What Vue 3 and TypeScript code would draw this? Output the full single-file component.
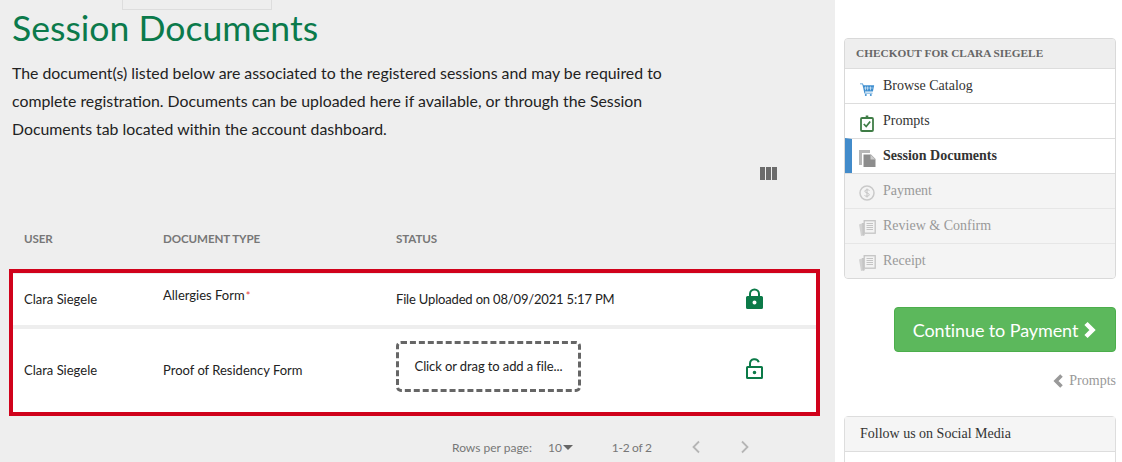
<script setup lang="ts">
interface Step { label: string; icon: string; state: 'done' | 'active' | 'off' }
const steps: Step[] = [
  { label: 'Browse Catalog', icon: 'cart', state: 'done' },
  { label: 'Prompts', icon: 'clip', state: 'done' },
  { label: 'Session Documents', icon: 'docs', state: 'active' },
  { label: 'Payment', icon: 'pay', state: 'off' },
  { label: 'Review & Confirm', icon: 'news', state: 'off' },
  { label: 'Receipt', icon: 'news', state: 'off' },
]
</script>

<template>
  <div class="page">
    <main class="main">
      <div class="tab"></div>
      <h1 class="title">Session Documents</h1>
      <p class="intro">The document(s) listed below are associated to the registered sessions and may be required to complete registration. Documents can be uploaded here if available, or through the Session Documents tab located within the account dashboard.</p>
      <div class="tools">
        <svg width="18" height="14" viewBox="0 0 18 14"><path fill="#6b6b6b" d="M0 0h5v13H0zM6 0h5v13H6zM12 0h5v13h-5z"/></svg>
      </div>
      <div class="grid head">
        <div>USER</div><div>DOCUMENT TYPE</div><div>STATUS</div><div></div>
      </div>
      <div class="box">
        <div class="grid row row1">
          <div class="cell">Clara Siegele</div>
          <div class="cell raised">Allergies Form<span class="req">*</span></div>
          <div class="cell status">File Uploaded on 08/09/2021 5:17 PM</div>
          <div class="lock">
            <svg width="17" height="21" viewBox="0 0 17 21"><path fill="#0b7a48" fill-rule="evenodd" d="M3 8V6a5.500 5.500 0 0 1 11 0v2h1.500A1.500 1.500 0 0 1 17 9.500v10a1.500 1.500 0 0 1-1.500 1.500h-14A1.500 1.500 0 0 1 0 19.500v-10A1.500 1.500 0 0 1 1.500 8zM5 8h7V6a3.500 3.500 0 0 0-7 0zM8.500 12.500a2 2 0 1 0 0 4 2 2 0 0 0 0-4z"/></svg>
          </div>
        </div>
        <div class="grid row row2">
          <div class="cell">Clara Siegele</div>
          <div class="cell">Proof of Residency Form</div>
          <div class="cell"><div class="drop">Click or drag to add a file...</div></div>
          <div class="lock open">
            <svg width="17" height="21" viewBox="0 0 17 21"><path fill="#0b7a48" fill-rule="evenodd" d="M3 8V5.500a5.500 5.500 0 0 1 10.700-1.600l-1.900.6A3.500 3.500 0 0 0 5 5.500V8h10.500A1.500 1.500 0 0 1 17 9.500v10a1.500 1.500 0 0 1-1.500 1.500h-14A1.500 1.500 0 0 1 0 19.500v-10A1.500 1.500 0 0 1 1.500 8zM2 10v9h13v-9zM8.500 12.700a1.800 1.800 0 1 0 0 3.600 1.800 1.800 0 0 0 0-3.600z"/></svg>
          </div>
        </div>
      </div>
      <div class="pager">
        <span class="rows">Rows per page:</span>
        <span class="size">10<i class="caret"></i></span>
        <span class="range">1-2 of 2</span>
        <svg class="pg" width="10" height="14" viewBox="0 0 10 14"><path d="M8 1.500 2.500 7 8 12.500" fill="none" stroke="#b5b5b5" stroke-width="1.800"/></svg>
        <svg class="pg" width="10" height="14" viewBox="0 0 10 14"><path d="M2 1.500 7.500 7 2 12.500" fill="none" stroke="#b5b5b5" stroke-width="1.800"/></svg>
      </div>
    </main>

    <aside class="side">
      <section class="panel">
        <header class="panel-head">CHECKOUT FOR CLARA SIEGELE</header>
        <div v-for="s in steps" :key="s.label" class="step" :class="s.state">
          <span class="ico">
            <svg v-if="s.icon === 'cart'" width="17" height="15" viewBox="0 0 18 18"><path fill="#3f8fd0" d="M0 3h3.500l.8 2H17l-1.500 7.500H6l.3 1.500H15v1H5.300L2.800 4H0z"/><path fill="#fff" d="M6 6.500h.7v4.500H6zM9 6.500h.7v4.500H9zM12 6.500h.7v4.500H12zM4.500 8h11v.6h-11z"/><circle cx="7" cy="16.800" r="1.200" fill="#3f8fd0"/><circle cx="13" cy="16.800" r="1.200" fill="#3f8fd0"/></svg>
            <svg v-else-if="s.icon === 'clip'" width="16" height="17" viewBox="0 0 16 17"><rect x="2" y="3" width="12" height="13" rx="1" fill="none" stroke="#3f7d46" stroke-width="1.800"/><path fill="#3f7d46" d="M5 3.500h6V2H9.300V0.500H6.700V2H5z"/><path d="M4.800 9 7.200 11.500 11.200 6.500" fill="none" stroke="#3f7d46" stroke-width="1.800"/></svg>
            <svg v-else-if="s.icon === 'docs'" width="17" height="17" viewBox="0 0 17 17"><path fill="#b7b7b7" d="M0 0h11v3H3v12H0z"/><path fill="#8d8d8d" d="M4.500 4.500H12L16.500 9v8H4.500z"/><path fill="#fff" d="M11.500 4.500 16.500 9.500h-5z" opacity=".55"/></svg>
            <svg v-else-if="s.icon === 'pay'" width="16" height="16" viewBox="0 0 16 16"><circle cx="8" cy="8" r="7" fill="none" stroke="#c9c9c9" stroke-width="1.500"/><path d="M10.500 5.500C10 4.700 6 4.200 5.800 6.100 5.600 8.200 10.500 7.600 10.300 9.900 10.100 11.800 6 11.300 5.500 10.500M8 3.500v9" fill="none" stroke="#c4c4c4" stroke-width="1"/></svg>
            <svg v-else width="17" height="16" viewBox="0 0 17 16"><path fill="#d2d2d2" d="M0 4.500 4 3v9l1 3.500L2 16z"/><path fill="#c7c7c7" d="M3 3h2v11h1l-1 2-1.500-1z"/><rect x="5.200" y="0.700" width="11" height="12.500" fill="#f3f3f3" stroke="#c4c4c4" stroke-width="1.300"/><path d="M7.500 3.500h6.500M7.500 5.500h6.500M7.500 7.500h6.500M7.500 9.500h6.500" stroke="#c4c4c4" stroke-width="1"/></svg>
          </span>
          <span class="label">{{ s.label }}</span>
        </div>
      </section>

      <div class="actions">
        <button class="continue" type="button">Continue to Payment
          <svg width="14" height="18" viewBox="0 0 14 18"><path d="M3 2.500l6.500 6.500-6.500 6.500" fill="none" stroke="#fff" stroke-width="4.500"/></svg>
        </button>
      </div>
      <div class="back">
        <svg width="11" height="14" viewBox="0 0 11 14"><path d="M8.500 1.500 3 7l5.500 5.500" fill="none" stroke="#999" stroke-width="3.600"/></svg>
        <span>Prompts</span>
      </div>
      <section class="social">
        <header class="social-head">Follow us on Social Media</header>
      </section>
    </aside>
  </div>
</template>

<style scoped>
.page { display: flex; width: 1122px; height: 462px; overflow: hidden; background: #fff; font-family: Lato, sans-serif; }
.main { position: relative; box-sizing: border-box; width: 835px; height: 462px; background: #eee; padding: 0 5px 0 9px; color: #222; }
.tab { position: absolute; left: 122px; top: -1px; width: 148px; height: 9px; border: 1px solid #ddd; }
.title { margin: 0 0 0 3px; padding-top: 6px; font-size: 35.6px; line-height: 44px; font-weight: 400; color: #0b7a4b; }
.intro { margin: 9px 0 0 3px; width: 664px; font-size: 15.85px; line-height: 28px; color: #222; }
.tools { display: flex; justify-content: flex-end; height: 14px; margin-top: 24px; padding-right: 52px; }
.grid { display: grid; grid-template-columns: 139px 233px 333px 1fr; align-items: center; }
.head { margin-top: 42px; height: 31px; padding: 0 0 0 15px; font-size: 11.6px; font-weight: 700; color: #777; letter-spacing: -0.1px; }
.box { margin-top: 15px; box-sizing: border-box; width: 811px; height: 147px; border: 4px solid #d0021b; padding-top: 1px; background: #eee; display: flex; flex-direction: column; gap: 4px; }
.row { box-sizing: border-box; background: #fff; padding: 0 0 2px 11px; font-size: 13px; color: #222; }
.row1 { height: 51px; }
.row2 { height: 83px; }
.raised { margin-bottom: 8px; }
.status { letter-spacing: -0.17px; }
.req { color: #e33b3b; font-size: 11px; margin-left: 1px; }
.drop { box-sizing: border-box; width: 185px; height: 51px; margin-bottom: 6px; padding-bottom: 2px; border: 3px dashed #666; border-radius: 5px; display: flex; align-items: center; justify-content: center; letter-spacing: -0.1px; }
.lock { display: flex; padding-left: 17px; }
.lock.open { margin-bottom: 2px; }
.pager { display: flex; align-items: center; margin-top: 21px; padding-left: 443px; height: 20px; font-size: 12px; color: #777; }
.size { margin-left: 16px; display: flex; align-items: center; }
.caret { display: inline-block; width: 0; height: 0; margin-left: 1px; border: 5px solid transparent; border-top: 5px solid #666; border-bottom: 0; }
.range { margin-left: 39px; letter-spacing: -0.3px; }
.pg { margin-left: 39px; }

.side { box-sizing: border-box; width: 287px; padding: 38px 6px 0 9px; font-family: "Liberation Serif", serif; }
.panel { border: 1px solid #d9d9d9; border-radius: 4px; overflow: hidden; background: #f4f4f4; }
.panel-head { height: 29px; line-height: 28px; padding-left: 11px; background: #eee; font-size: 11.3px; font-weight: 700; color: #666; }
.step { display: flex; align-items: center; height: 35px; box-sizing: border-box; border-top: 1px solid #ddd; padding-left: 14px; font-size: 14px; background: #fff; color: #333; }
.step.active { border-left: 7px solid #428bca; padding-left: 7px; font-weight: 700; }
.step.off { background: #f4f4f4; color: #999; border-top-color: #e6e6e6; }
.step.active + .off { border-top-color: #ddd; }
.ico { display: flex; width: 24px; height: 18px; align-items: center; margin-top: 4px; }
.actions { display: flex; justify-content: flex-end; margin-top: 28px; }
.continue { box-sizing: border-box; width: 222px; height: 45px; border: 1px solid #4cae4c; border-radius: 4px; background: #5cb85c; color: #fff; font-family: Lato, sans-serif; font-size: 18px; letter-spacing: -0.1px; display: flex; align-items: center; justify-content: center; gap: 5px; padding: 0; }
.back { display: flex; justify-content: flex-end; align-items: center; gap: 5px; margin-top: 21px; font-size: 14px; color: #999; }
.social { margin-top: 27px; border: 1px solid #ddd; border-radius: 4px; height: 80px; }
.social-head { height: 35px; line-height: 33px; box-sizing: border-box; padding-left: 15px; background: #f5f5f5; border-bottom: 1px solid #ddd; font-size: 14px; color: #333; }
</style>
